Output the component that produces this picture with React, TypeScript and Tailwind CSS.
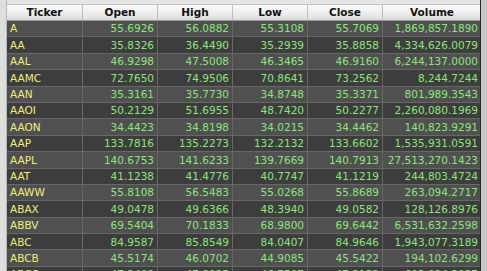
import React from "react";

const rows: string[][] = [
  ["A", "55.6926", "56.0882", "55.3108", "55.7069", "1,869,857.1890"],
  ["AA", "35.8326", "36.4490", "35.2939", "35.8858", "4,334,626.0079"],
  ["AAL", "46.9298", "47.5008", "46.3465", "46.9160", "6,244,137.0000"],
  ["AAMC", "72.7650", "74.9506", "70.8641", "73.2562", "8,244.7244"],
  ["AAN", "35.3161", "35.7730", "34.8748", "35.3371", "801,989.3543"],
  ["AAOI", "50.2129", "51.6955", "48.7420", "50.2277", "2,260,080.1969"],
  ["AAON", "34.4423", "34.8198", "34.0215", "34.4462", "140,823.9291"],
  ["AAP", "133.7816", "135.2273", "132.2132", "133.6602", "1,535,931.0591"],
  ["AAPL", "140.6753", "141.6233", "139.7669", "140.7913", "27,513,270.1423"],
  ["AAT", "41.1238", "41.4776", "40.7747", "41.1219", "244,803.4724"],
  ["AAWW", "55.8108", "56.5483", "55.0268", "55.8689", "263,094.2717"],
  ["ABAX", "49.0478", "49.6366", "48.3940", "49.0582", "128,126.8976"],
  ["ABBV", "69.5404", "70.1833", "68.9800", "69.6442", "6,531,632.2598"],
  ["ABC", "84.9587", "85.8549", "84.0407", "84.9646", "1,943,077.3189"],
  ["ABCB", "45.5174", "46.0702", "44.9085", "45.5422", "194,102.6299"],
  ["ABCO", "47.2408", "47.8025", "46.7507", "47.3132", "693,024.3937"],
];

const headers = ["Ticker", "Open", "High", "Low", "Close", "Volume"];
const widths = ["w-[76px]", "w-[75px]", "w-[75px]", "w-[75px]", "w-[75px]", "w-[98px]"];

export default function App() {
  return (
    <div
      className="w-[487px] h-[271px] overflow-hidden bg-[#e6e6e6] flex"
      style={{ fontFamily: '"DejaVu Sans", Verdana, sans-serif' }}
    >
      {/* left gutter */}
      <div className="w-[7px] shrink-0 bg-[#dedede] border-r border-[#b8b8b8]" />

      <div className="flex flex-col w-[474px] shrink-0 pt-[4px] border-r border-[#2a2a2a]">
        {/* header */}
        <div className="flex h-[17px] shrink-0 bg-gradient-to-b from-[#fbfbfb] via-[#efefef] to-[#dcdcdc] border-t border-[#c4c4c4] border-b border-b-[#9a9a9a]">
          {headers.map((h, i) => (
            <div
              key={h}
              className={`${widths[i]} shrink-0 flex items-center justify-center text-[10.5px] font-bold text-[#111] border-r border-[#bdbdbd] last:border-r-0`}
            >
              {h}
            </div>
          ))}
        </div>

        {/* body */}
        <div className="flex flex-col">
          {rows.map((r, ri) => (
            <div
              key={r[0]}
              className={`flex h-[16.4px] shrink-0 border-b border-[#676767] ${ri % 2 === 0 ? "bg-[#505050]" : "bg-[#3d3d3d]"}`}
            >
              {r.map((c, ci) => (
                <div
                  key={ci}
                  className={`${widths[ci]} shrink-0 flex items-center px-[3px] text-[10.5px] leading-none border-r border-[#676767] last:border-r-0 ${
                    ci === 0 ? "justify-start text-[#f0ef7c]" : "justify-end text-[#8fe37f]"
                  }`}
                >
                  {c}
                </div>
              ))}
            </div>
          ))}
        </div>
      </div>

      {/* right edge */}
      <div className="flex-1 bg-[#c9c9c9]" />
    </div>
  );
}
